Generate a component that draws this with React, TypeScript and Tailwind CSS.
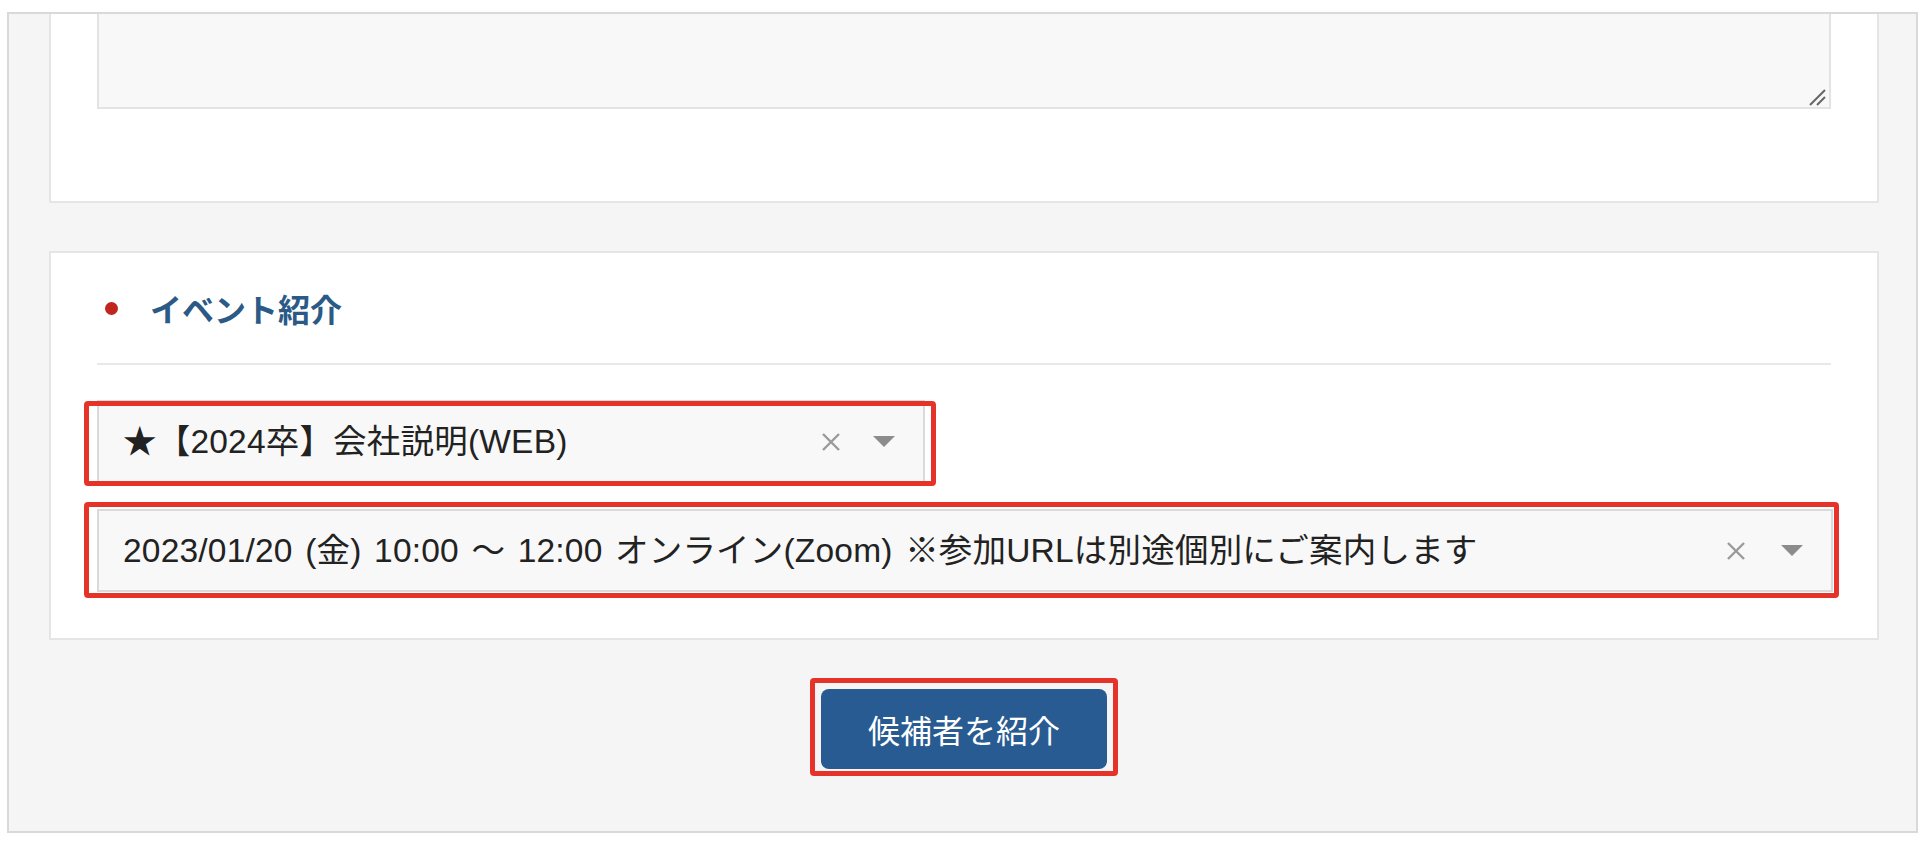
import React from 'react'

const FONT = { fontFamily: '"Noto Sans CJK JP", "Liberation Sans", sans-serif' }
// 選択欄の英数字は Helvetica 系の幅に寄せる
const LABEL_FONT = { fontFamily: '"Liberation Sans", "Noto Sans CJK JP", sans-serif' }

function ClearIcon() {
  return (
    <svg width="20" height="18" viewBox="0 0 20 18" className="shrink-0">
      <path d="M2 1 L18 17 M18 1 L2 17" stroke="#9a9a9a" strokeWidth="2.4" fill="none" />
    </svg>
  )
}

function CaretIcon() {
  return (
    <svg width="22" height="11" viewBox="0 0 22 11" className="shrink-0">
      <polygon points="0,0 22,0 11,11" fill="#8c8c8c" />
    </svg>
  )
}

interface SelectProps {
  label: string
  width: string
  clearRight: string
  mark: string
}

function SelectBox({ label, width, clearRight, mark }: SelectProps) {
  return (
    <div className={`relative ${width}`}>
      <div className="flex h-[83px] items-center border-2 border-[#dadada] bg-[#f8f8f8] pl-[24px] pr-[28px]">
        <span
          className="min-w-0 flex-1 truncate text-[33.5px] leading-[48px] tracking-[0.2px] text-[#222] [word-spacing:3px]"
          style={LABEL_FONT}
        >
          {label}
        </span>
        <div className={`flex items-center ${clearRight}`}>
          <ClearIcon />
        </div>
        <CaretIcon />
      </div>
      {/* 赤枠の注釈 */}
      <div className={`pointer-events-none absolute rounded-[4px] border-[5px] border-[#e5332a] ${mark}`} />
    </div>
  )
}

export default function App() {
  return (
    <div className="min-h-screen bg-white pl-[7px] pt-[12px]" style={FONT}>
      <div className="w-[1911px] border-2 border-[#d9d9d9] bg-[#f5f5f5] pb-[62px] pl-[40px]">
        {/* メモ欄 */}
        <div className="w-[1830px] border-x-2 border-b-2 border-[#e5e5e5] bg-white px-[46px] pb-[92px]">
          <div className="relative h-[95px] border-x-2 border-b-2 border-[#e3e3e3] bg-[#f8f8f8]">
            <svg width="18" height="18" viewBox="0 0 18 18" className="absolute bottom-[1px] right-[2px]">
              <path d="M1 17 L16 2 M8 17 L16 9" stroke="#666" strokeWidth="2" fill="none" />
            </svg>
          </div>
        </div>

        {/* イベント紹介 */}
        <div className="mt-[48px] w-[1830px] border-2 border-[#e5e5e5] bg-white px-[46px] pb-[46px] pt-[31px]">
          <div className="flex h-[48px] items-center">
            <span className="ml-[8px] h-[13px] w-[13px] rounded-full bg-[#c0261d]" />
            <span className="ml-[32px] text-[32px] font-bold leading-none text-[#2b5a86]">イベント紹介</span>
          </div>
          <div className="mt-[31px] h-[2px] bg-[#e8e8e8]" />
          <div className="mt-[35px] flex flex-col gap-[26px]">
            <SelectBox
              label="★【2024卒】会社説明(WEB)"
              width="w-[828px]"
              clearRight="mr-[32px]"
              mark="-left-[13px] -right-[11px] top-[1px] -bottom-[3px]"
            />
            <SelectBox
              label="2023/01/20 (金) 10:00 〜 12:00 オンライン(Zoom) ※参加URLは別途個別にご案内します"
              width="w-[1736px]"
              clearRight="mr-[35px]"
              mark="-left-[13px] -right-[6px] -top-[7px] -bottom-[6px]"
            />
          </div>
        </div>

        {/* 送信ボタン */}
        <div className="mt-[49px] flex w-[1830px] justify-center">
          <div className="relative">
            <button className="h-[80px] w-[286px] rounded-[8px] bg-[#285b91] text-[32px] text-white">
              候補者を紹介
            </button>
            <div className="pointer-events-none absolute -bottom-[7px] -left-[11px] -right-[11px] -top-[11px] rounded-[4px] border-[5px] border-[#e5332a]" />
          </div>
        </div>
      </div>
    </div>
  )
}
